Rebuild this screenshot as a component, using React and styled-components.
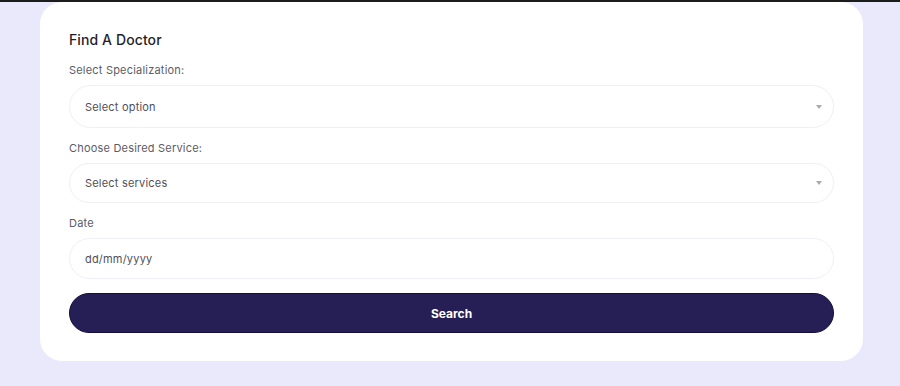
import React from 'react';
import styled, { createGlobalStyle } from 'styled-components';

const GlobalStyle = createGlobalStyle`
  html, body {
    margin: 0;
    padding: 0;
    background: #e9e9fb;
  }
  body {
    font-family: Inter, "Open Sans", sans-serif;
    border-top: 2px solid #1c1c1c;
  }
`;

const Page = styled.div`
  padding: 0 37px 26px 40px;
  height: 384px;
  box-sizing: border-box;
`;

const Card = styled.form`
  background: #ffffff;
  border-radius: 22px;
  padding: 29px 29px 28px 29px;
  display: flex;
  flex-direction: column;
`;

const Title = styled.h2`
  margin: 0 0 15px;
  font-size: 14px;
  font-weight: 500;
  color: #1f1f2b;
  letter-spacing: 0.1px;
`;

const Label = styled.label`
  font-size: 11px;
  color: #5c5c66;
  margin-bottom: 8px;
  letter-spacing: 0.2px;
`;

const Field = styled.div`
  position: relative;
  height: ${(p) => p.$h}px;
  box-sizing: border-box;
  border: 1px solid #efeff7;
  border-radius: 22px;
  display: flex;
  align-items: center;
  padding: 0 15px;
  margin-bottom: ${(p) => p.$gap}px;
  font-size: 11px;
  color: #4f4f5a;
  letter-spacing: 0.2px;
`;

const Caret = styled.span`
  position: absolute;
  right: 11px;
  top: 50%;
  margin-top: -2px;
  width: 0;
  height: 0;
  border-left: 3px solid transparent;
  border-right: 3px solid transparent;
  border-top: 4px solid #a9a9b2;
`;

const Button = styled.button`
  height: 40px;
  border: 1px solid #130f3a;
  border-radius: 20px;
  background: #251f55;
  color: #ffffff;
  font-family: Inter, Roboto, sans-serif;
  font-weight: 700;
  font-size: 12px;
  cursor: pointer;
`;

function SelectField({ placeholder, h, gap }) {
  return (
    <Field $h={h} $gap={gap}>
      {placeholder}
      <Caret />
    </Field>
  );
}

export default function App() {
  return (
    <>
      <GlobalStyle />
      <Page>
        <Card onSubmit={(e) => e.preventDefault()}>
          <Title>Find A Doctor</Title>
          <Label>Select Specialization:</Label>
          <SelectField placeholder="Select option" h={43} gap={13} />
          <Label>Choose Desired Service:</Label>
          <SelectField placeholder="Select services" h={40} gap={13} />
          <Label>Date</Label>
          <Field $h={41} $gap={14}>dd/mm/yyyy</Field>
          <Button type="submit">Search</Button>
        </Card>
      </Page>
    </>
  );
}
